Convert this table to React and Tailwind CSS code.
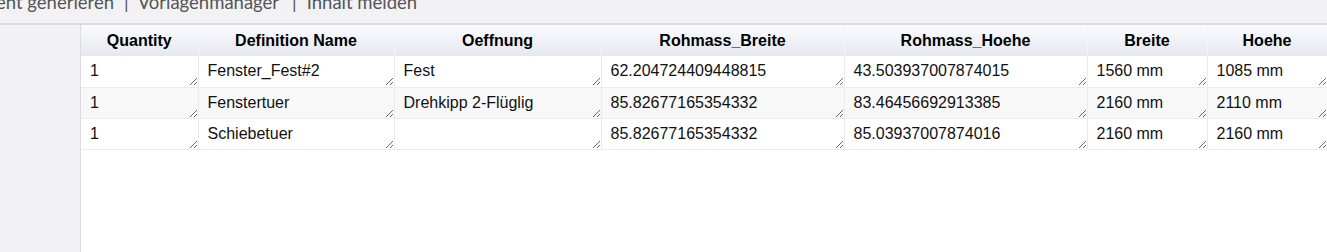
import React from 'react';

const columns = [
    { key: 'quantity', label: 'Quantity', width: 'w-[117px]' },
    { key: 'name', label: 'Definition Name', width: 'w-[196px]' },
    { key: 'opening', label: 'Oeffnung', width: 'w-[207px]' },
    { key: 'rawWidth', label: 'Rohmass_Breite', width: 'w-[243px]' },
    { key: 'rawHeight', label: 'Rohmass_Hoehe', width: 'w-[243px]' },
    { key: 'width', label: 'Breite', width: 'w-[120px]' },
    { key: 'height', label: 'Hoehe', width: 'w-[120px]' },
];

const rows = [
    { quantity: '1', name: 'Fenster_Fest#2', opening: 'Fest', rawWidth: '62.204724409448815', rawHeight: '43.503937007874015', width: '1560 mm', height: '1085 mm' },
    { quantity: '1', name: 'Fenstertuer', opening: 'Drehkipp 2-Flüglig', rawWidth: '85.82677165354332', rawHeight: '83.46456692913385', width: '2160 mm', height: '2110 mm' },
    { quantity: '1', name: 'Schiebetuer', opening: '', rawWidth: '85.82677165354332', rawHeight: '85.03937007874016', width: '2160 mm', height: '2160 mm' },
];

const App = () => {
    return (
        <div className="w-[1327px] h-[252px] overflow-hidden bg-[#f2f2f5]">
            {/* clipped toolbar links */}
            <div className="h-[23px] overflow-hidden whitespace-nowrap font-['Lato',sans-serif] text-[18.5px] leading-[19px] text-[#555]">
                <div className="mt-[-7px] ml-[-4px] flex">
                    <span>ent generieren</span>
                    <span className="ml-[10px] mr-[9px]">|</span>
                    <span>Vorlagenmanager</span>
                    <span className="ml-[13px] mr-[10px]">|</span>
                    <span>Inhalt melden</span>
                </div>
            </div>
            <div className="h-[2px] bg-[#dcdcdf]" />

            <div className="flex h-[227px]">
                <div className="w-[81px] shrink-0 border-r border-[#dcdcdf]" />
                <div className="flex-1 bg-white overflow-hidden">
                    <table className="table-fixed border-collapse w-[1246px] font-['Liberation_Sans',Arial,sans-serif]">
                        <thead>
                            <tr className="h-[31px] bg-gradient-to-b from-[#fbfbfd] to-[#e5e8f0]">
                                {columns.map(col => (
                                    <th key={col.key} className={`${col.width} p-0 text-center text-[16px] font-bold text-black border-r border-[#f3f4f8]`}>
                                        {col.label}
                                    </th>
                                ))}
                            </tr>
                        </thead>
                        <tbody>
                            {rows.map((row, i) => (
                                <tr key={i} className={`h-[31px] border-b border-[#ebebeb] ${i === 1 ? 'bg-[#f8f8f8]' : 'bg-white'}`}>
                                    {columns.map(col => (
                                        <td key={col.key} className="p-0 border-r border-[#ebebeb] align-top">
                                            <textarea
                                                defaultValue={row[col.key]}
                                                className="block w-full h-[30px] pl-[9px] pr-[4px] pt-[5px] text-[16px] leading-[20px] text-[#111] bg-transparent border-0 outline-none overflow-hidden resize font-['Liberation_Sans',Arial,sans-serif]"
                                            />
                                        </td>
                                    ))}
                                </tr>
                            ))}
                        </tbody>
                    </table>
                </div>
            </div>
        </div>
    );
};

export default App;
